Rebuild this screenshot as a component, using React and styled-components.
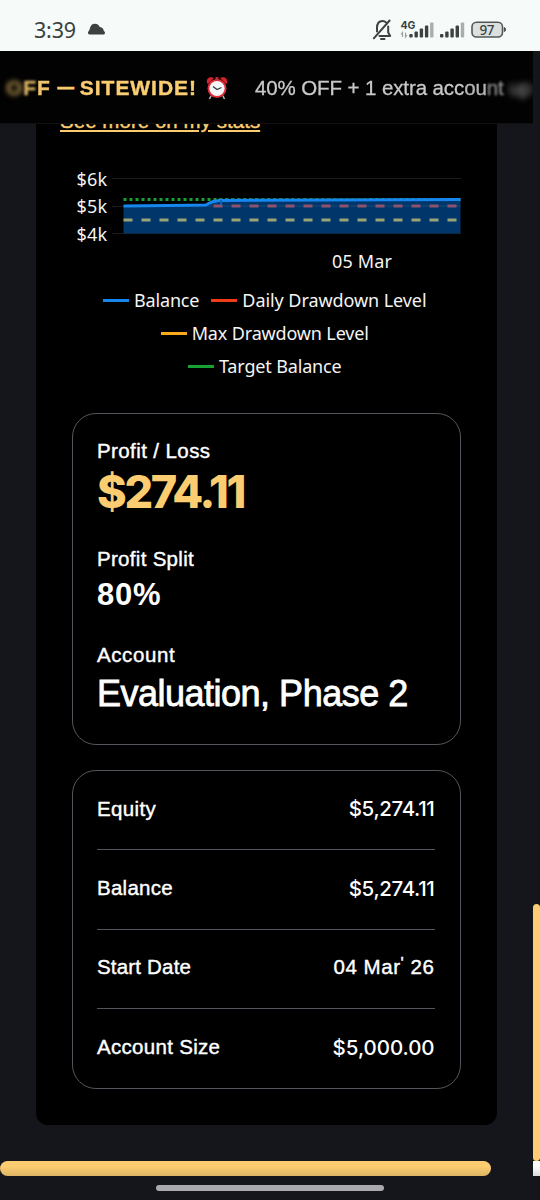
import React from 'react';
import styled, { createGlobalStyle } from 'styled-components';

const GlobalStyle = createGlobalStyle`
  * { box-sizing: border-box; }
  body {
    margin: 0;
    background: #15161c;
    font-family: "Liberation Sans", Arial, sans-serif;
    color: #fff;
  }
`;

const Screen = styled.div`
  width: 540px;
  height: 1200px;
  display: flex;
  flex-direction: column;
  overflow: hidden;
  background: #15161c;
`;

const StatusBar = styled.header`
  flex: 0 0 51px;
  display: flex;
  align-items: center;
  padding: 8px 34px 0;
  background: #f6fbf9;
  color: #3b4241;
`;

const Time = styled.span`
  width: 42px;
  font: 400 21.5px/28px "Noto Sans", sans-serif;
  letter-spacing: -0.2px;
  white-space: nowrap;
`;

const Cloud = styled.svg`
  margin: -1px 0 0 11px;
`;

const StatusIcons = styled.svg`
  margin-left: auto;
  margin-right: -2px;
`;

const Viewport = styled.main`
  flex: 0 0 1125px;
  display: grid;
  grid-template-columns: minmax(0, 1fr) 7px;
  grid-template-rows: 1110px 15px;
`;

const Page = styled.div`
  overflow: hidden;
`;

const Banner = styled.div`
  position: relative;
  z-index: 1;
  height: 73px;
  width: 533px;
  padding: 2px 0 0 6px;
  display: flex;
  align-items: center;
  overflow: hidden;
  background: #020202;
  border-bottom: 1px solid #101010;
  white-space: nowrap;
`;

const Offer = styled.span`
  color: #fbcd70;
  font-size: 21px;
  font-weight: 700;
  letter-spacing: 0.95px;
  -webkit-text-stroke: 0.4px currentColor;
  filter: blur(${({ $blur }) => $blur || 0}px);
  opacity: ${({ $fade }) => $fade || 1};
`;

const Dash = styled.span`
  margin: 0 6px 0 7px;
  color: #fbcd70;
  font-size: 16px;
  font-weight: 700;
  line-height: 20px;
  -webkit-text-stroke: 1px currentColor;
`;

const Alarm = styled.svg`
  flex: none;
  margin: 0 27px 0 9px;
`;

const Extra = styled.span`
  color: #c9c9c9;
  font-size: 20.5px;
  letter-spacing: -0.1px;
  white-space: pre;
  -webkit-text-stroke: 0.3px currentColor;
  filter: blur(${({ $blur }) => $blur || 0}px);
  opacity: ${({ $fade }) => $fade || 1};
`;

const Card = styled.section`
  width: 460.5px;
  height: 1001px;
  margin-left: 36px;
  padding: 0 36px;
  background: #000;
  border-radius: 0 0 12px 12px;
  display: flex;
  flex-direction: column;
`;

const StatsLink = styled.a`
  align-self: flex-start;
  margin: -15px 0 0 -12px;
  height: 24px;
  font-size: 20.5px;
  line-height: 24px;
  letter-spacing: 0.04px;
  -webkit-text-stroke: 0.4px currentColor;
  color: #fbcd70;
  text-decoration: underline;
  text-decoration-thickness: 1.5px;
  text-underline-offset: 2px;
  white-space: nowrap;
`;

const Chart = styled.svg`
  display: block;
  flex: none;
  margin-top: 27px;
  font: 400 18px "Noto Sans", sans-serif;
`;

const Legend = styled.ul`
  flex: none;
  list-style: none;
  height: 99px;
  margin: 1px 0 0;
  padding: 0 23px 0 20px;
  display: flex;
  flex-wrap: wrap;
  align-content: flex-start;
  justify-content: center;
  column-gap: 12px;
`;

const LegendItem = styled.li`
  display: flex;
  align-items: center;
  gap: 5px;
  height: 33px;
  font: 400 18px/33px "Noto Sans", sans-serif;
  letter-spacing: ${({ $spacing }) => $spacing}px;
  color: #f4f4f4;
  white-space: nowrap;

  &::before {
    content: "";
    width: 26px;
    height: 3px;
    background: ${({ $color }) => $color};
  }
`;

const Panel = styled.div`
  flex: none;
  width: 388.5px;
  height: ${({ $height }) => $height}px;
  margin-top: ${({ $top }) => $top}px;
  padding: 0 25px 0 24px;
  border: 1px solid #54555c;
  border-radius: 24px;
`;

const Label = styled.div`
  font-size: 20.5px;
  line-height: 26px;
  letter-spacing: ${({ $spacing }) => $spacing || 0}px;
  padding-top: ${({ $top }) => $top || 0}px;
  -webkit-text-stroke: 0.4px currentColor;
  white-space: nowrap;
`;

const Value = styled.div`
  color: ${({ $gold }) => ($gold ? '#fbcd70' : '#fff')};
  font-family: ${({ $numeric }) => ($numeric ? 'Inter, sans-serif' : 'inherit')};
  font-size: ${({ $size }) => $size}px;
  line-height: ${({ $line }) => $line}px;
  font-weight: ${({ $weight }) => $weight};
  letter-spacing: ${({ $spacing }) => $spacing || 0}px;
  -webkit-text-stroke: ${({ $stroke }) => $stroke || 0}px currentColor;
  white-space: nowrap;
`;

const Row = styled.div`
  display: flex;
  justify-content: space-between;
  align-items: center;
  height: 79.4px;
  padding-bottom: 3px;
  font-size: 20.5px;
  border-bottom: 1px solid #54555c;

  &:last-child {
    border-bottom: 0;
  }
`;

const RowText = styled.span`
  letter-spacing: ${({ $spacing }) => $spacing || 0}px;
  -webkit-text-stroke: 0.4px currentColor;
`;

const Amount = styled.span`
  font-family: Inter, sans-serif;
  font-weight: 500;
  letter-spacing: ${({ $spacing }) => $spacing || 0}px;
`;

const Tick = styled.span`
  display: inline-block;
  font-size: 17px;
  transform: translateY(-5px);
`;

const VerticalTrack = styled.div`
  display: flex;
  align-items: flex-end;
`;

const VerticalThumb = styled.div`
  width: 7px;
  height: 257px;
  border-radius: 4px;
  background: #fbcd70;
`;

const HorizontalThumb = styled.div`
  width: 491px;
  height: 15px;
  border-radius: 7.5px;
  background: linear-gradient(#fdcd71 35%, #dbb563);
`;

const Corner = styled.div`
  background: linear-gradient(#fff 35%, #d9d9dc);
`;

const NavArea = styled.footer`
  flex: 1;
  display: flex;
  justify-content: center;
  padding-top: 9px;
`;

const NavPill = styled.div`
  width: 228px;
  height: 6px;
  border-radius: 3px;
  background: #aaa9ad;
`;

const legend = [
  { label: 'Balance', color: '#1687ee', spacing: -0.15 },
  { label: 'Daily Drawdown Level', color: '#f23c18', spacing: -0.07 },
  { label: 'Max Drawdown Level', color: '#fca91c', spacing: -0.15 },
  { label: 'Target Balance', color: '#17a033', spacing: -0.15 },
];

const details = [
  { label: 'Equity', value: '$5,274.11', ls: 0.35, vs: -0.35, numeric: true },
  { label: 'Balance', value: '$5,274.11', ls: 0.25, vs: -0.35, numeric: true },
  { label: 'Start Date', value: <>04 Mar<Tick>'</Tick> 26</>, ls: 0.18, vs: 0.55 },
  { label: 'Account Size', value: '$5,000.00', ls: 0.3, vs: -0.05, numeric: true },
];

const AlarmClock = () => (
  <Alarm width="22" height="24" viewBox="0 0 22 24">
    <path d="M5 20 3.5 23M17 20l1.5 3" stroke="#b8bcc0" strokeWidth="1.5" />
    <path d="M1 7C0 3 3 0 8 2L2 8ZM21 7c1-4-2-7-7-5l6 6Z" fill="#d8232f" />
    <path d="M9.5 1h3v3h-3z" fill="#b92a31" />
    <circle cx="11" cy="12.5" r="9.5" fill="#dc2e38" />
    <circle cx="11" cy="12.5" r="7.6" fill="#f4f7f7" />
    <path d="m7 10.5 4 3 4.5-2" fill="none" stroke="#34383c" strokeWidth="1.2" />
  </Alarm>
);

const BalanceChart = () => (
  <Chart width="389" height="123" viewBox="72 160 389 123">
    <path d="M112 178.5h349M112 206.5h349M112 233.5h349" stroke="#1b1b1b" />
    <path d="M123.5 199.5h337" stroke="#17a033" strokeWidth="3" strokeDasharray="3 3" />
    <path
      d="M123.5 206 204 205C210 204 209 201 219 200L460.5 199.5V233.5H123.5Z"
      fill="#00366a"
    />
    <path d="M205 206h255" stroke="#164b78" />
    <path d="M213.5 206h247" stroke="#8e526f" strokeWidth="3" strokeDasharray="9 9" />
    <path d="M123.5 220h337" stroke="#9aa375" strokeWidth="3" strokeDasharray="9 9" />
    <path
      d="M123.5 206 190 205.3 206 205C210 203 211 201 219 200.5L460.5 199.5"
      fill="none"
      stroke="#1687ee"
      strokeWidth="3"
    />
    <path d="M221 200v5" stroke="#0a66bd" strokeWidth="2" />
    <path d="M219 198.5h150" stroke="#167a70" strokeDasharray="3 3" />
    <g fill="#f4f4f4">
      <text x="76.5" y="186" textLength="30.5">$6k</text>
      <text x="76.5" y="213" textLength="30.5">$5k</text>
      <text x="76.5" y="241" textLength="30.5">$4k</text>
      <text x="332" y="268" textLength="60">05 Mar</text>
    </g>
  </Chart>
);

const SignalBars = ({ x }) => (
  <g transform={`translate(${x} 0)`}>
    <rect x="0" y="33.5" width="3.4" height="3.5" rx="1" />
    <rect x="5.2" y="31" width="3.4" height="6" rx="1" />
    <rect x="10.4" y="28" width="3.4" height="9" rx="1" />
    <rect x="15.6" y="25" width="3.4" height="12" rx="1" />
    <rect x="20.8" y="22" width="3.4" height="15" rx="1" opacity=".42" />
  </g>
);

const DeviceIcons = () => (
  <StatusIcons width="136" height="30" viewBox="372 14.5 136 30" fill="#3b4241">
    <g fill="none" stroke="#3b4241" strokeWidth="2" strokeLinecap="round" strokeLinejoin="round">
      <path d="M373.8 37.8 389.6 20" />
      <path d="M377 31v-3.5c0-4.5 2.3-7 5.5-7 1.5 0 2.7.5 3.5 1.4M388.2 26v6l2 3.5H379.5" />
      <path d="M381 38.4h3.500" />
    </g>
    <text x="400.5" y="28" fontFamily="Inter, sans-serif" fontSize="10.5" fontWeight="700">4G</text>
    <path d="M402.5 36.5v-4.5l-1.500 2M405.5 32v4.500l1.500-2" fill="none" stroke="#9ba09f" strokeWidth="1.2" />
    <SignalBars x={409.3} />
    <SignalBars x={440} />
    <rect x="472" y="21.7" width="30.5" height="14.8" rx="4.5" fill="#dce1df" stroke="#525957" strokeWidth="1.6" />
    <path d="M504.3 27c1.700 0 1.700 4 0 4Z" stroke="#3b4241" strokeWidth=".8" />
    <text x="479.5" y="34" fontFamily="Noto Sans, sans-serif" fontSize="13.5" fontWeight="500" textLength="15">97</text>
  </StatusIcons>
);

const App = () => (
  <>
    <GlobalStyle />
    <Screen>
      <StatusBar>
        <Time>3:39</Time>
        <Cloud width="19" height="12" viewBox="0 0 19 12">
          <path d="M2.5 11.5C.8 11.5.4 9.5 1.6 8.3 2.3 7.5 2.8 6.3 3 5 3.6 2.3 5.5.8 7.8.8c2.4 0 4.1 1.2 5 3.3 2.6.2 3.6 1.800 3.900 3.600 1.500.8 2.100 3.800-.4 3.800Z" fill="#3b4241" />
        </Cloud>
        <DeviceIcons />
      </StatusBar>
      <Viewport>
        <Page>
          <Banner>
            <Offer $blur={2.5} $fade={0.65}>O</Offer>
            <Offer $blur={1} $fade={0.85}>F</Offer>
            <Offer $blur={0.4} $fade={0.95}>F</Offer>
            <Dash>—</Dash>
            <Offer>SITEWIDE!</Offer>
            <AlarmClock />
            <Extra>40% OFF + 1 extra acc</Extra>
            <Extra $blur={0.3} $fade={0.9}>ou</Extra>
            <Extra $blur={0.8} $fade={0.7}>nt</Extra>
            <Extra $blur={3} $fade={0.65}> up</Extra>
          </Banner>
          <Card>
            <StatsLink>See more on my stats</StatsLink>
            <BalanceChart />
            <Legend>
              {legend.map((item) => (
                <LegendItem key={item.label} $color={item.color} $spacing={item.spacing}>
                  {item.label}
                </LegendItem>
              ))}
            </Legend>
            <Panel $height={332} $top={30}>
              <Label $top={24} $spacing={0.4}>Profit / Loss</Label>
              <Value $gold $numeric $size={45} $line={56} $weight={800} $spacing={-2.3}>$274.11</Value>
              <Label $top={26} $spacing={0.3}>Profit Split</Label>
              <Value $size={31} $line={46} $weight={700} $spacing={0.8}>80%</Value>
              <Label $top={24} $spacing={0.6}>Account</Label>
              <Value $size={36} $line={52} $weight={400} $stroke={0.8} $spacing={-0.5}>
                Evaluation, Phase 2
              </Value>
            </Panel>
            <Panel $height={319} $top={25}>
              {details.map((row) => (
                <Row key={row.label}>
                  <RowText $spacing={row.ls}>{row.label}</RowText>
                  {row.numeric ? (
                    <Amount $spacing={row.vs}>{row.value}</Amount>
                  ) : (
                    <RowText $spacing={row.vs}>{row.value}</RowText>
                  )}
                </Row>
              ))}
            </Panel>
          </Card>
        </Page>
        <VerticalTrack>
          <VerticalThumb />
        </VerticalTrack>
        <HorizontalThumb />
        <Corner />
      </Viewport>
      <NavArea>
        <NavPill />
      </NavArea>
    </Screen>
  </>
);

export default App;
